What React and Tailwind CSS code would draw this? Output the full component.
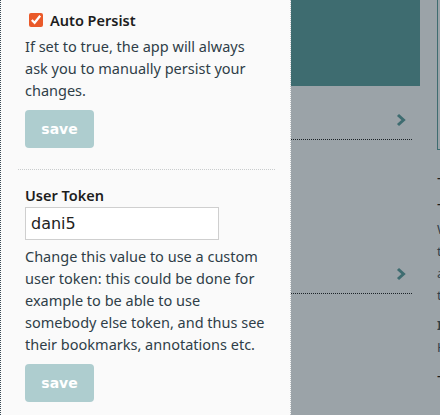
export default function App() {
  return (
    <div className="flex w-[440px] h-[415px] overflow-hidden bg-[#9ba3a8] font-['Noto_Sans',sans-serif]">
      {/* settings side panel */}
      <aside className="w-[291px] shrink-0 h-full bg-[#fafafa] border-l border-dotted border-l-[#3a4a55] border-r border-r-[#bfc4c7]">
        <section className="pl-[24px] pr-[22px] pt-[10px] pb-[21px]">
          <label className="flex items-center gap-[7px] text-[14.5px] font-semibold text-[#1d1d1d] leading-[20px]">
            <input type="checkbox" defaultChecked className="ml-[4px] w-[14px] h-[14px] accent-[#ea5a2a]" />
            Auto Persist
          </label>
          <p className="mt-[5px] text-[14.5px] leading-[22px] text-[#2f3e48]">
            If set to true, the app will always ask you to manually persist your changes.
          </p>
          <button className="mt-[9px] w-[69px] h-[38px] rounded-[4px] bg-[#aecdcf] text-white font-bold text-[14px] font-['DejaVu_Sans',sans-serif]">
            save
          </button>
        </section>

        <div className="mx-[17px] w-[257px] border-t border-dotted border-[#c9cccd]" />

        <section className="pl-[24px] pr-[22px] pt-[14px]">
          <h3 className="text-[14.5px] font-semibold text-[#1d1d1d] leading-[22px]">User Token</h3>
          <input
            type="text"
            defaultValue="dani5"
            className="mt-[1px] w-[194px] h-[33px] px-[5px] border border-[#cfcfcf] bg-white text-[16px] text-[#222] font-['DejaVu_Sans',sans-serif] outline-none"
          />
          <p className="mt-[5px] text-[14.5px] leading-[22px] text-[#2f3e48]">
            Change this value to use a custom user token: this could be done for example to be able to use somebody else token, and thus see their bookmarks, annotations etc.
          </p>
          <button className="mt-[9px] w-[69px] h-[38px] rounded-[4px] bg-[#aecdcf] text-white font-bold text-[14px] font-['DejaVu_Sans',sans-serif]">
            save
          </button>
        </section>
      </aside>

      {/* dimmed page behind */}
      <div className="flex flex-1 h-full">
        <div className="w-[129px] shrink-0">
          <div className="h-[86px] bg-[#3e6c70]" />
          <div className="h-[54px] pr-[8px]">
            <div className="h-full flex items-end justify-end pr-[6px] pb-[12px] border-b border-dotted border-[#1c2328]">
              <Chevron />
            </div>
          </div>
          <div className="h-[154px] pr-[8px]">
            <div className="h-full flex items-end justify-end pr-[6px] pb-[12px] border-b border-dotted border-[#1c2328]">
              <Chevron />
            </div>
          </div>
        </div>
        <div className="flex-1 pl-[17px] overflow-hidden">
          <div className="h-[150px] border-l border-b border-[#3e6c70]" />
          <div className="text-[13px] leading-[22px] text-[#2f3e48] whitespace-nowrap">
            <div className="mt-[16px] font-bold text-[#1d1d1d]">—</div>
            <div className="mt-[4px] font-bold text-[#1d1d1d]">—</div>
            <div className="mt-[4px]">Wh</div>
            <div>the</div>
            <div>an</div>
            <div>the</div>
            <div className="mt-[8px] font-bold">I</div>
            <div>Ho</div>
            <div className="mt-[6px] font-bold text-[#1d1d1d]">—</div>
          </div>
        </div>
      </div>
    </div>
  );
}

function Chevron() {
  return (
    <svg width="10" height="14" viewBox="0 0 10 14" fill="none">
      <path d="M2 2 L7.5 7 L2 12" stroke="#3e6c70" strokeWidth="3" />
    </svg>
  );
}
